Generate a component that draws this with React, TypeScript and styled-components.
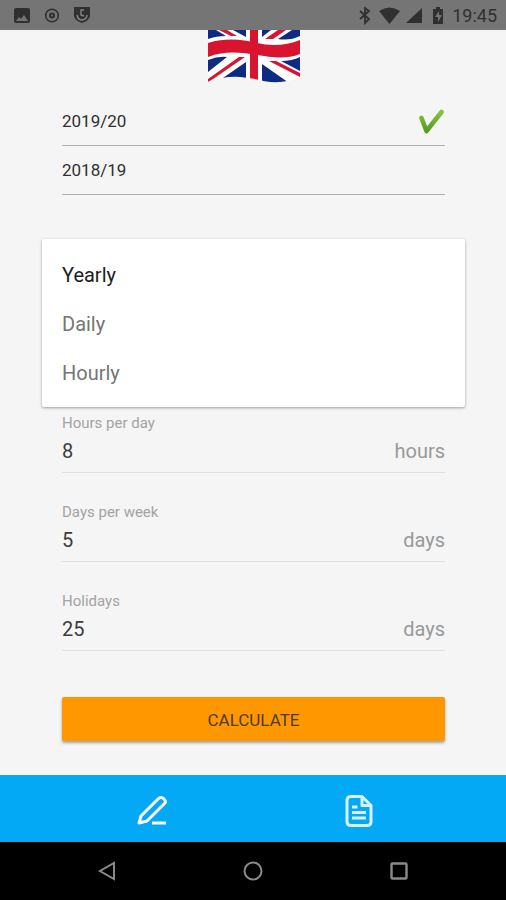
import React, { useState } from "react";
import styled, { createGlobalStyle } from "styled-components";

const GlobalStyle = createGlobalStyle`
  *, *::before, *::after { box-sizing: border-box; }
  body { margin: 0; background: #f5f5f5; font-family: Roboto, "Noto Sans", sans-serif; }
  button, input { font: inherit; color: inherit; }
`;

const Screen = styled.div`
  display: flex;
  flex-direction: column;
  min-height: 100vh;
  background: #f5f5f5;
`;

const StatusBar = styled.header`
  display: flex;
  align-items: center;
  justify-content: space-between;
  height: 30px;
  padding: 2px 9px 0 13px;
  background: #757575;
  color: #303030;
  font-size: 18px;
  line-height: 20px;
`;

const StatusGroup = styled.div<{ $gap: number }>`
  display: flex;
  align-items: center;
  gap: ${(p) => p.$gap}px;
  svg { display: block; }
`;

const Content = styled.main`
  display: flex;
  flex-direction: column;
  flex: 1;
  padding: 0 61px 34px 62px;
`;

const Flag = styled.svg`
  display: block;
  align-self: center;
  width: 92px;
  height: 54px;
  margin-bottom: 13px;
`;

const YearButton = styled.button`
  display: flex;
  align-items: center;
  justify-content: space-between;
  height: 49px;
  padding: 0;
  border: 0;
  border-bottom: 1px solid #b0b0b0;
  background: none;
  color: #303030;
  font-size: 17px;
  text-align: left;
`;

const PeriodMenu = styled.div`
  display: flex;
  flex-direction: column;
  margin: 44px -20px 6px;
  padding: 11px 0 10px;
  border-radius: 2px;
  background: #fff;
  box-shadow: 0 1px 3px rgba(0, 0, 0, 0.36);
`;

const PeriodOption = styled.button<{ $selected: boolean }>`
  height: 49px;
  padding: 0 20px;
  border: 0;
  background: none;
  color: ${(p) => (p.$selected ? "#1c1c1c" : "#757575")};
  font-size: 20px;
  text-align: left;
`;

const Fields = styled.div`
  display: flex;
  flex-direction: column;
  gap: 29px;
`;

const Field = styled.div`
  border-bottom: 1px solid #e0e0e0;
`;

const FieldLabel = styled.label`
  display: block;
  color: #a3a3a3;
  font-size: 15px;
  line-height: 20px;
`;

const FieldRow = styled.div`
  display: flex;
  align-items: center;
  height: 36px;
  margin-bottom: 3px;
  font-size: 20px;
`;

const FieldInput = styled.input`
  flex: 1;
  min-width: 0;
  padding: 0;
  border: 0;
  outline: 0;
  background: none;
  color: #3c3c3c;
`;

const Unit = styled.span`
  color: #999;
`;

const CalculateButton = styled.button`
  height: 44px;
  margin-top: 46px;
  padding: 2px 0 0;
  border: 0;
  border-radius: 2px;
  background: #ff9800;
  color: #4f3a1b;
  font-size: 17px;
  box-shadow: 0 2px 3px rgba(0, 0, 0, 0.34);
`;

const TabBar = styled.nav`
  display: flex;
  height: 67px;
  padding: 4px 44px 0 48px;
  background: #03a9f4;
`;

const SystemBar = styled.footer`
  display: flex;
  height: 58px;
  padding: 0 34px;
  background: #000;
`;

const IconButton = styled.button<{ $color: string }>`
  display: flex;
  flex: 1;
  align-items: center;
  justify-content: center;
  padding: 0;
  border: 0;
  background: none;
  color: ${(p) => p.$color};
`;

function UnionFlag() {
  return (
    <Flag viewBox="0 0 92 54" role="img" aria-label="United Kingdom">
      <defs>
        <clipPath id="cloth">
          <path d="M0-10H92V47Q84 51 72 52C57 53 48 48 32 47Q16 46 0 52Z" />
        </clipPath>
      </defs>
      <g clipPath="url(#cloth)">
        <path d="M0-10H92V54H0Z" fill="#fff" />
        <path d="M0 0H8L18 6Q8 6 0 9ZM25 0H38V7Z" fill="#0d2a85" />
        <path d="M54 0H63L54 7ZM92-1V6Q82 11 70 9L84 0Z" fill="#0d2a85" />
        <path d="M0 30Q10 26 19 27L0 42ZM38 32V50H12Z" fill="#0d2a85" />
        <path d="M54 34L84 55H54ZM73 31Q84 31 92 27V41Z" fill="#0d2a85" />
        <path d="M11 0H19L29 6H23ZM70 0H78L65 9H57Z" fill="#d9142f" />
        <path d="M31 27H37L5 49L0 52V49ZM61 31H68L92 43V47Z" fill="#d9142f" />
        <path d="M0 13C20 7 36 10 49 13S78 16 92 10V24C77 30 62 27 49 25S18 20 0 27Z" fill="#d9142f" />
        <path d="M42-1H50V54H42Z" fill="#d9142f" />
      </g>
    </Flag>
  );
}

function CheckMark() {
  return (
    <svg width="26" height="28" viewBox="0 0 26 28" fill="none" aria-hidden="true">
      <defs>
        <linearGradient id="leaf" x1="0" y1="0" x2="0" y2="1">
          <stop offset="0" stopColor="#86c440" />
          <stop offset="1" stopColor="#559b20" />
        </linearGradient>
      </defs>
      <path d="M2.500 11L7.500 24L22.500 5" stroke="url(#leaf)" strokeWidth="4.600" strokeLinecap="round" strokeLinejoin="round" />
    </svg>
  );
}

const units = [
  { id: "hours-per-day", label: "Hours per day", value: "8", unit: "hours" },
  { id: "days-per-week", label: "Days per week", value: "5", unit: "days" },
  { id: "holidays", label: "Holidays", value: "25", unit: "days" },
];

export default function App() {
  const [year, setYear] = useState("2019/20");
  const [period, setPeriod] = useState("Yearly");

  return (
    <>
      <GlobalStyle />
      <Screen>
        <StatusBar>
          <StatusGroup $gap={12}>
            <svg width="18" height="18" viewBox="0 0 18 18">
              <rect x="1" y="1" width="16" height="15" rx="2" fill="#303030" />
              <path d="M3 14L6 10L8 12L11 8L15 14Z" fill="#757575" />
            </svg>
            <svg width="18" height="18" viewBox="0 0 18 18" fill="none" stroke="#303030">
              <circle cx="9" cy="8.5" r="6.3" strokeWidth="1.6" />
              <circle cx="9" cy="8.5" r="2" strokeWidth="2" />
            </svg>
            <svg width="18" height="18" viewBox="0 0 18 18" fill="none">
              <path d="M1 0H17V9Q16 14 9 16Q2 14 1 9Z" fill="#303030" />
              <path d="M4 8Q5 13 9 13Q14 12 14 8M11 3H8V8L11 9" stroke="#858585" strokeWidth="1.4" />
            </svg>
          </StatusGroup>
          <StatusGroup $gap={4}>
            <svg width="20" height="20" viewBox="0 0 20 20" fill="none" stroke="#303030" strokeWidth="1.8">
              <path d="M5 5L14 13L10 17V2L14 5L5 13" />
            </svg>
            <svg width="21" height="20" viewBox="0 0 21 20" fill="#303030">
              <path d="M0 5Q10.500-2 21 5L10.500 18Z" />
            </svg>
            <svg width="20" height="20" viewBox="0 0 20 20" fill="#303030">
              <path d="M18 2V17H2Z" />
            </svg>
            <svg width="20" height="20" viewBox="0 0 20 20">
              <path d="M8 1H12V3H15V18H5V3H8Z" fill="#303030" />
              <path d="M11 5L7 11H10V16L14 9H11Z" fill="#757575" />
            </svg>
            <time>19:45</time>
          </StatusGroup>
        </StatusBar>

        <Content>
          <UnionFlag />
          {["2019/20", "2018/19"].map((item) => (
            <YearButton key={item} type="button" aria-pressed={year === item} onClick={() => setYear(item)}>
              {item}
              {year === item && <CheckMark />}
            </YearButton>
          ))}

          <PeriodMenu role="listbox" aria-label="Pay period">
            {["Yearly", "Daily", "Hourly"].map((item) => (
              <PeriodOption
                key={item}
                type="button"
                role="option"
                aria-selected={period === item}
                $selected={period === item}
                onClick={() => setPeriod(item)}
              >
                {item}
              </PeriodOption>
            ))}
          </PeriodMenu>

          <Fields>
            {units.map((field) => (
              <Field key={field.id}>
                <FieldLabel htmlFor={field.id}>{field.label}</FieldLabel>
                <FieldRow>
                  <FieldInput id={field.id} defaultValue={field.value} inputMode="numeric" />
                  <Unit>{field.unit}</Unit>
                </FieldRow>
              </Field>
            ))}
          </Fields>

          <CalculateButton type="button">CALCULATE</CalculateButton>
        </Content>

        <TabBar>
          <IconButton type="button" aria-label="Edit" $color="#ffffff">
            <svg width="32" height="32" viewBox="0 0 32 32" fill="none" stroke="currentColor" strokeWidth="3" strokeLinejoin="round">
              <path d="M3 28L5 21L22 4Q25 1 28 4T28 9L11 26Z" />
              <path d="M16 28H30" />
            </svg>
          </IconButton>
          <IconButton type="button" aria-label="Results" $color="#d9f0fc">
            <svg width="32" height="34" viewBox="0 0 32 34" fill="none" stroke="currentColor" strokeWidth="3" strokeLinejoin="round">
              <path d="M18 2.500H8Q4 2.500 4 6.500V27.500Q4 31.500 8 31.500H24Q28 31.500 28 27.500V11.500L19 2.500V11.500H27" />
              <path d="M9 13H14.500M9 18.500H23M9 24H23" />
            </svg>
          </IconButton>
        </TabBar>

        <SystemBar>
          <IconButton type="button" aria-label="Back" $color="#8a8a8a">
            <svg width="20" height="20" viewBox="0 0 20 20" fill="none" stroke="currentColor" strokeWidth="2">
              <path d="M17 2V18L3 10Z" />
            </svg>
          </IconButton>
          <IconButton type="button" aria-label="Home" $color="#8a8a8a">
            <svg width="20" height="20" viewBox="0 0 20 20" fill="none" stroke="currentColor" strokeWidth="2">
              <circle cx="10" cy="10" r="8.5" />
            </svg>
          </IconButton>
          <IconButton type="button" aria-label="Overview" $color="#8a8a8a">
            <svg width="20" height="20" viewBox="0 0 20 20" fill="none" stroke="currentColor" strokeWidth="2.4">
              <rect x="2.500" y="2.500" width="15" height="15" rx="1" />
            </svg>
          </IconButton>
        </SystemBar>
      </Screen>
    </>
  );
}
